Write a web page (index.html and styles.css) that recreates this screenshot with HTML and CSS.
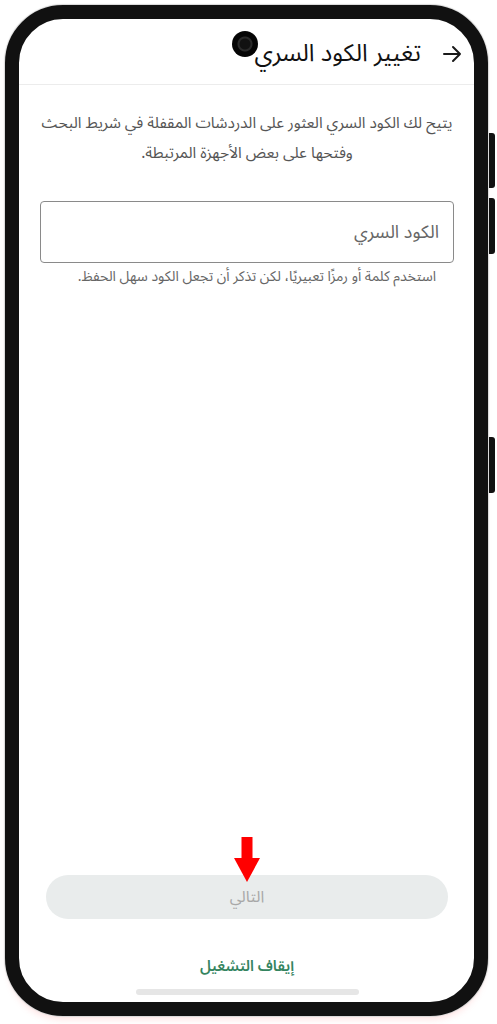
FILE: index.html
```html
<!DOCTYPE html>
<html lang="ar">
<head>
<meta charset="utf-8">
<title>تغيير الكود السري</title>
<link rel="stylesheet" href="styles.css">
</head>
<body>
<div class="stage">
  <div class="phone">
    <span class="btn btn-1"></span>
    <span class="btn btn-2"></span>
    <span class="btn btn-3"></span>
    <span class="camera"></span>
    <div class="screen" dir="rtl">
      <header class="topbar">
        <span class="back">
          <svg width="20" height="18" viewBox="0 0 20 18"><path d="M2 9H18M11 2L18 9L11 16" fill="none" stroke="#1a1a1a" stroke-width="2" stroke-linecap="round" stroke-linejoin="round"/></svg>
        </span>
        <h1 class="title">تغيير الكود السري</h1>
      </header>
      <main class="content">
        <p class="desc">يتيح لك الكود السري العثور على الدردشات المقفلة في شريط البحث وفتحها على بعض الأجهزة المرتبطة.</p>
        <div class="field"><span class="placeholder">الكود السري</span></div>
        <p class="hint">استخدم كلمة أو رمزًا تعبيريًا، لكن تذكر أن تجعل الكود سهل الحفظ.</p>
        <div class="spacer"></div>
        <div class="next-wrap">
          <span class="red-arrow">
            <svg width="28" height="46" viewBox="0 0 28 46"><rect x="8.5" y="0" width="11" height="22" fill="#ff0000"/><path d="M1 21H27L14 45Z" fill="#ff0000"/></svg>
          </span>
          <div class="next">التالي</div>
        </div>
        <div class="stop">إيقاف التشغيل</div>
        <div class="home"></div>
      </main>
    </div>
  </div>
</div>
</body>
</html>
```
FILE: styles.css
```css
html, body {
  margin: 0;
  padding: 0;
  background: #ffffff;
}
body {
  width: 497px;
  height: 1024px;
  overflow: hidden;
  font-family: "Noto Sans Arabic", "Noto Naskh Arabic", "DejaVu Sans", sans-serif;
}
.stage {
  padding: 5px 0 0 5px;
}
.phone {
  position: relative;
  width: 483px;
  height: 1011px;
  box-sizing: border-box;
  border: 14px solid #111111;
  border-radius: 58px;
  background: #ffffff;
  box-shadow: 0 0 1px 1px #d8d8d8, 0 7px 6px -3px rgba(255, 140, 140, 0.22);
}
.btn {
  position: absolute;
  right: -21px;
  width: 6px;
  background: #111111;
  border-radius: 0 3px 3px 0;
}
.btn-1 { top: 114px; height: 55px; }
.btn-2 { top: 179px; height: 56px; }
.btn-3 { top: 418px; height: 56px; }
.camera {
  position: absolute;
  top: 12px;
  left: 213px;
  width: 26px;
  height: 26px;
  border-radius: 50%;
  background: radial-gradient(circle, #111 0 5px, #2a2a2a 6px 7px, #050505 8px);
  z-index: 2;
}
.screen {
  height: 100%;
  border-radius: 44px;
  overflow: hidden;
  display: flex;
  flex-direction: column;
}
.topbar {
  height: 66px;
  border-bottom: 1px solid #ececec;
  display: flex;
  align-items: center;
  padding-right: 12px;
  padding-top: 4px;
  box-sizing: border-box;
  flex-shrink: 0;
}
.back {
  display: flex;
  width: 20px;
  height: 18px;
  margin-left: 21px;
}
.title {
  margin: 0;
  font-size: 24px;
  font-weight: 400;
  color: #111111;
  line-height: 1;
}
.content {
  flex: 1;
  display: flex;
  flex-direction: column;
  padding: 0 20px 0 21px;
}
.desc {
  margin: 23px 0 0;
  text-align: center;
  font-size: 15.5px;
  line-height: 30px;
  color: #555555;
}
.field {
  margin-top: 33px;
  height: 62px;
  box-sizing: border-box;
  border: 1px solid #8a8a8a;
  border-radius: 4px;
  display: flex;
  align-items: center;
  padding-right: 14px;
}
.placeholder {
  font-size: 18px;
  color: #666666;
}
.hint {
  margin: 3px 18px 0 0;
  font-size: 14px;
  line-height: 22px;
  color: #666666;
}
.spacer {
  flex: 1;
}
.next-wrap {
  position: relative;
  margin: 0 6px 0 6px;
}
.red-arrow {
  position: absolute;
  top: -38px;
  left: 50%;
  margin-left: -14px;
  display: flex;
  z-index: 1;
}
.next {
  height: 44px;
  border-radius: 22px;
  background: #e9ecec;
  display: flex;
  align-items: center;
  justify-content: center;
  font-size: 16px;
  color: #a8a8a8;
}
.stop {
  margin-top: 34px;
  text-align: center;
  font-size: 15px;
  font-weight: 600;
  color: #34845f;
  line-height: 26px;
}
.home {
  align-self: center;
  width: 223px;
  height: 6px;
  border-radius: 3px;
  background: #e6e6e6;
  margin: 10px 0 7px 0;
}
```
